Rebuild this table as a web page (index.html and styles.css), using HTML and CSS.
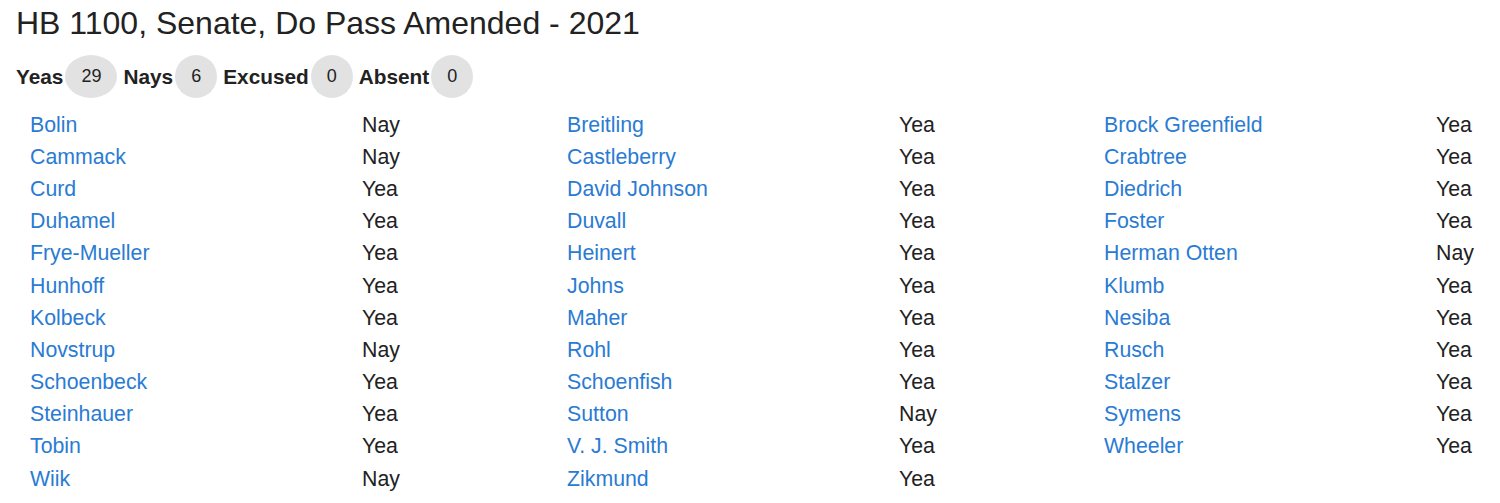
FILE: index.html
```html
<!DOCTYPE html>
<html>
<head>
<meta charset="utf-8">
<link rel="stylesheet" href="styles.css">
</head>
<body>
<div class="page">
  <h1 class="title">HB 1100, Senate, Do Pass Amended - 2021</h1>
  <div class="tally">
    <span class="tally-item"><b>Yeas</b><span class="badge">29</span></span>
    <span class="tally-item"><b>Nays</b><span class="badge">6</span></span>
    <span class="tally-item"><b>Excused</b><span class="badge">0</span></span>
    <span class="tally-item"><b>Absent</b><span class="badge">0</span></span>
  </div>
  <div class="columns">
    <div class="col">
      <a class="name">Bolin</a><span class="vote">Nay</span>
      <a class="name">Cammack</a><span class="vote">Nay</span>
      <a class="name">Curd</a><span class="vote">Yea</span>
      <a class="name">Duhamel</a><span class="vote">Yea</span>
      <a class="name">Frye-Mueller</a><span class="vote">Yea</span>
      <a class="name">Hunhoff</a><span class="vote">Yea</span>
      <a class="name">Kolbeck</a><span class="vote">Yea</span>
      <a class="name">Novstrup</a><span class="vote">Nay</span>
      <a class="name">Schoenbeck</a><span class="vote">Yea</span>
      <a class="name">Steinhauer</a><span class="vote">Yea</span>
      <a class="name">Tobin</a><span class="vote">Yea</span>
      <a class="name">Wiik</a><span class="vote">Nay</span>
    </div>
    <div class="col">
      <a class="name">Breitling</a><span class="vote">Yea</span>
      <a class="name">Castleberry</a><span class="vote">Yea</span>
      <a class="name">David Johnson</a><span class="vote">Yea</span>
      <a class="name">Duvall</a><span class="vote">Yea</span>
      <a class="name">Heinert</a><span class="vote">Yea</span>
      <a class="name">Johns</a><span class="vote">Yea</span>
      <a class="name">Maher</a><span class="vote">Yea</span>
      <a class="name">Rohl</a><span class="vote">Yea</span>
      <a class="name">Schoenfish</a><span class="vote">Yea</span>
      <a class="name">Sutton</a><span class="vote">Nay</span>
      <a class="name">V. J. Smith</a><span class="vote">Yea</span>
      <a class="name">Zikmund</a><span class="vote">Yea</span>
    </div>
    <div class="col">
      <a class="name">Brock Greenfield</a><span class="vote">Yea</span>
      <a class="name">Crabtree</a><span class="vote">Yea</span>
      <a class="name">Diedrich</a><span class="vote">Yea</span>
      <a class="name">Foster</a><span class="vote">Yea</span>
      <a class="name">Herman Otten</a><span class="vote">Nay</span>
      <a class="name">Klumb</a><span class="vote">Yea</span>
      <a class="name">Nesiba</a><span class="vote">Yea</span>
      <a class="name">Rusch</a><span class="vote">Yea</span>
      <a class="name">Stalzer</a><span class="vote">Yea</span>
      <a class="name">Symens</a><span class="vote">Yea</span>
      <a class="name">Wheeler</a><span class="vote">Yea</span>
    </div>
  </div>
</div>
</body>
</html>
```

FILE: styles.css
```css
html, body {
  margin: 0;
  padding: 0;
  background: #ffffff;
  overflow: hidden;
}
body {
  font-family: "Liberation Sans", Arial, sans-serif;
  color: #222222;
}
.page {
  padding: 5px 16px 0 16px;
}
.title {
  margin: 0;
  font-size: 32px;
  font-weight: normal;
  line-height: 36px;
  color: #222222;
}
.tally {
  margin-top: 14px;
  display: flex;
  align-items: center;
  gap: 6px;
  height: 43px;
}
.tally-item {
  display: flex;
  align-items: center;
  gap: 2px;
}
.tally-item b {
  font-size: 20.8px;
  font-weight: bold;
}
.badge {
  display: inline-block;
  background: #e2e2e2;
  border-radius: 50%;
  padding: 8px 16px;
  font-size: 18px;
  line-height: 27px;
  color: #222222;
  text-align: center;
}
.columns {
  margin-top: 11px;
  padding-left: 14px;
  display: grid;
  grid-template-columns: 537px 537px 1fr;
}
.col {
  display: grid;
  grid-template-columns: 332px auto;
  grid-auto-rows: 32.2px;
  align-items: center;
  font-size: 21.3px;
}
.name {
  color: #2a7bd3;
  text-decoration: none;
}
.vote {
  color: #222222;
}
```
